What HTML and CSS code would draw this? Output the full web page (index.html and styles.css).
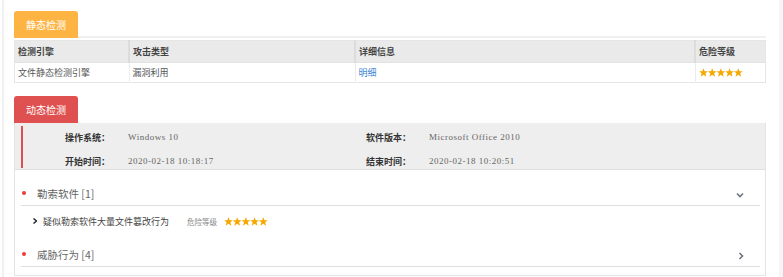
FILE: index.html
```html
<!DOCTYPE html>
<html lang="zh-CN">
<head>
  <meta charset="utf-8" />
  <link rel="stylesheet" href="styles.css">
  <title>检测报告</title>
</head>
<body>
  <svg class="defs" width="0" height="0">
    <defs>
      <polygon id="star" points="4.5,0.2 5.7,3.2 8.9,3.3 6.4,5.3 7.3,8.7 4.5,6.8 1.7,8.7 2.6,5.3 0.1,3.3 3.3,3.2" fill="#f5a800"/>
    </defs>
  </svg>
  <div class="page">
    <div class="tab-bar">
      <div class="tab tab-static">静态检测</div>
    </div>
    <table class="result-table">
      <thead>
        <tr>
          <th class="col-engine">检测引擎</th>
          <th class="col-type">攻击类型</th>
          <th class="col-info">详细信息</th>
          <th class="col-level">危险等级</th>
        </tr>
      </thead>
      <tbody>
        <tr>
          <td>文件静态检测引擎</td>
          <td>漏洞利用</td>
          <td><a class="link" href="#">明细</a></td>
          <td>
            <svg class="stars" width="44" height="9" viewBox="0 0 44 9">
              <use href="#star" x="0"/><use href="#star" x="8.7"/><use href="#star" x="17.4"/><use href="#star" x="26.1"/><use href="#star" x="34.8"/>
            </svg>
          </td>
        </tr>
      </tbody>
    </table>

    <div class="tab tab-dynamic">动态检测</div>
    <div class="panel">
      <div class="info">
        <div class="info-bar"></div>
        <div class="info-grid">
          <span class="info-label">操作系统：</span>
          <span class="info-value">Windows 10</span>
          <span class="info-label">软件版本：</span>
          <span class="info-value">Microsoft Office 2010</span>
          <span class="info-label">开始时间：</span>
          <span class="info-value">2020-02-18 10:18:17</span>
          <span class="info-label">结束时间：</span>
          <span class="info-value">2020-02-18 10:20:51</span>
        </div>
      </div>

      <div class="groups">
        <div class="group-head">
          <span class="dot"></span>
          <span class="group-title">勒索软件 [1]</span>
          <svg class="chevron" width="8" height="6" viewBox="0 0 8 6"><path d="M1 1.5 L4 4.5 L7 1.5" fill="none" stroke="#6b7580" stroke-width="1.6"/></svg>
        </div>
        <div class="group-item">
          <svg class="caret" width="4" height="6" viewBox="0 0 4 6"><path d="M0.5 0.5 L3.5 3 L0.5 5.5" fill="none" stroke="#222" stroke-width="1.4"/></svg>
          <span class="item-name">疑似勒索软件大量文件篡改行为</span>
          <span class="item-level">危险等级</span>
          <svg class="stars" width="44" height="9" viewBox="0 0 44 9">
            <use href="#star" x="0"/><use href="#star" x="8.7"/><use href="#star" x="17.4"/><use href="#star" x="26.1"/><use href="#star" x="34.8"/>
          </svg>
        </div>
        <div class="group-head">
          <span class="dot"></span>
          <span class="group-title">威胁行为 [4]</span>
          <svg class="chevron" width="6" height="8" viewBox="0 0 6 8"><path d="M1.5 1 L4.5 4 L1.5 7" fill="none" stroke="#6b7580" stroke-width="1.6"/></svg>
        </div>
      </div>
    </div>
  </div>
</body>
</html>
```

FILE: styles.css
```css
body {
  margin: 0;
  background: #fff;
  font-family: "Noto Sans CJK SC", "Noto Sans", sans-serif;
  color: #555;
}
.defs {
  position: absolute;
}
.page {
  margin-left: 2px;
  border-left: 2px solid #f0f0f0;
  border-right: 4px solid #f2f6f6;
  padding: 11px 13px 2px 10px;
  height: 264px;
}
.tab-bar {
  height: 25px;
  border-bottom: 2px solid #f0f0f0;
  margin-bottom: 2px;
}
.tab {
  width: 64px;
  height: 27px;
  line-height: 28px;
  text-align: center;
  color: #fff;
  font-size: 10px;
  border-radius: 3px 3px 0 0;
  box-sizing: border-box;
}
.tab-static {
  background: #fdb443;
}
.tab-dynamic {
  background: #df5050;
  margin-top: 13px;
}

/* static table */
.result-table {
  width: 100%;
  border-collapse: collapse;
  border: 1px solid #e6e6e6;
  font-size: 9px;
}
.result-table th {
  background: #eaeaea;
  height: 21px;
  padding: 0 3px;
  text-align: left;
  font-weight: 600;
  color: #444;
  border-right: 2px solid #dcdcdc;
  border-bottom: 1px solid #e2e2e2;
}
.result-table td {
  height: 19px;
  padding: 0 3px;
  color: #555;
  border-right: 1px solid #ececec;
}
.result-table th:last-child,
.result-table td:last-child {
  border-right: none;
}
.col-engine { width: 107px; }
.col-type { width: 218px; }
.col-info { width: 332px; }
.link {
  color: #3a86d6;
  text-decoration: none;
}
.stars {
  display: block;
}

/* dynamic panel */
.panel {
  border: 1px solid #e4e4e4;
  border-top: none;
  padding-bottom: 8px;
}
.info {
  display: flex;
  background: #eeeeee;
  height: 47px;
  border-bottom: 1px solid #e0e0e0;
  box-sizing: border-box;
}
.info-bar {
  width: 2px;
  margin: 3px 0 1px 6px;
  background: #e05050;
}
.info-grid {
  flex: 1;
  display: grid;
  grid-template-columns: 63px 238px 63px 1fr;
  grid-auto-rows: 24px;
  align-items: center;
  padding: 2px 0 0 42px;
}
.info-label {
  font-size: 9px;
  font-weight: 700;
  color: #333;
}
.info-value {
  font-family: "Liberation Serif", serif;
  font-size: 9px;
  letter-spacing: 0.5px;
  color: #666;
}
.groups {
  padding: 0 5px 0 6px;
}
.group-head {
  display: flex;
  align-items: center;
  height: 14px;
  padding: 16px 0 5px;
  border-bottom: 1px solid #dedede;
}
.dot {
  width: 4px;
  height: 4px;
  border-radius: 50%;
  background: #f03a3a;
  margin: 0 11px 0 1px;
}
.group-title {
  flex: 1;
  font-size: 10.5px;
  color: #666;
}
.chevron {
  margin: 3px 16px 0 0;
}
.group-item {
  display: flex;
  align-items: center;
  height: 12px;
  padding: 9px 0 4px 12px;
}
.caret {
  margin-right: 6px;
}
.item-name {
  font-size: 9px;
  color: #444;
  width: 144px;
}
.item-level {
  font-size: 7.5px;
  color: #888;
  margin-right: 7px;
}
```
